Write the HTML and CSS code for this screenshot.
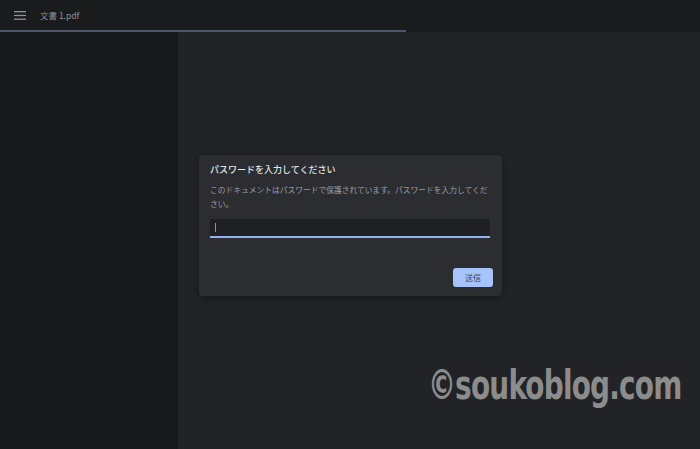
FILE: index.html
```html
<!DOCTYPE html>
<html lang="ja">
<head>
    <meta charset="UTF-8">
    <meta name="viewport" content="width=device-width, initial-scale=1.0">
    <title>文書 1.pdf</title>
    <link rel="stylesheet" href="styles.css">
</head>
<body>
    <header class="toolbar">
        <svg class="menu-icon" width="12" height="9" viewBox="0 0 12 9">
            <rect x="0" y="0" width="12" height="1.3" fill="#8e9297"/>
            <rect x="0" y="3.8" width="12" height="1.3" fill="#8e9297"/>
            <rect x="0" y="7.6" width="12" height="1.3" fill="#8e9297"/>
        </svg>
        <span class="doc-title">文書 1.pdf</span>
    </header>
    <div class="progress"><div class="progress-bar"></div></div>
    <div class="viewer">
        <aside class="sidebar"></aside>
        <main class="content">
            <div class="dialog">
                <h2 class="dialog-title">パスワードを入力してください</h2>
                <p class="dialog-text">このドキュメントはパスワードで保護されています。パスワードを入力してください。</p>
                <div class="password-field"><span class="caret"></span></div>
                <div class="dialog-actions">
                    <button class="submit">送信</button>
                </div>
            </div>
        </main>
    </div>
    <div class="watermark">©soukoblog.com</div>
</body>
</html>
```

FILE: styles.css
```css
html, body {
    margin: 0;
    height: 100%;
}
body {
    background-color: #222326;
    font-family: "Noto Sans CJK JP", "Noto Sans", sans-serif;
    overflow: hidden;
    position: relative;
}
.toolbar {
    height: 30px;
    background-color: #1a1b1d;
    display: flex;
    align-items: center;
    padding-left: 14px;
    box-sizing: border-box;
}
.menu-icon {
    display: block;
}
.doc-title {
    margin-left: 14px;
    font-size: 8.5px;
    color: #8e9297;
    line-height: 1;
}
.progress {
    height: 2px;
    background-color: #1a1b1d;
}
.progress-bar {
    width: 406px;
    height: 2px;
    background-color: #4f5769;
}
.viewer {
    display: flex;
    height: calc(100% - 32px);
}
.sidebar {
    width: 178px;
    background-color: #18191b;
}
.content {
    flex: 1;
    background-color: #222326;
    padding: 123px 0 0 21px;
}
.dialog {
    width: 303px;
    height: 141px;
    box-sizing: border-box;
    background-color: #2c2d30;
    border-radius: 4px;
    box-shadow: 0 2px 8px rgba(0, 0, 0, 0.35);
    padding: 8px 9px 9px 11px;
    display: flex;
    flex-direction: column;
}
.dialog-title {
    margin: 0;
    font-size: 9px;
    font-weight: 500;
    color: #e3e5e8;
    line-height: 14px;
}
.dialog-text {
    margin: 6px 0 0;
    font-size: 7.75px;
    color: #9a9ea4;
    line-height: 14px;
}
.password-field {
    margin-top: 8px;
    width: 280px;
    height: 19px;
    box-sizing: border-box;
    background-color: #1f2023;
    border-bottom: 2px solid #93b2ec;
    border-radius: 2px 2px 0 0;
    display: flex;
    align-items: center;
    padding-left: 5px;
}
.caret {
    width: 1px;
    height: 9px;
    background-color: #8a93a6;
}
.dialog-actions {
    margin-top: auto;
    display: flex;
    justify-content: flex-end;
}
.submit {
    width: 40px;
    height: 19px;
    border: none;
    border-radius: 3px;
    background-color: #a6c4fa;
    color: #3a4660;
    font-family: "Noto Sans CJK JP", sans-serif;
    font-size: 8px;
    padding: 0;
}
.watermark {
    position: absolute;
    left: 428px;
    top: 365px;
    font-family: "DejaVu Sans Condensed", "DejaVu Sans", sans-serif;
    font-weight: bold;
    font-size: 40px;
    letter-spacing: -1px;
    color: #8c8c8c;
    line-height: 1;
    transform: scaleX(0.775);
    transform-origin: left top;
    white-space: nowrap;
}
```
